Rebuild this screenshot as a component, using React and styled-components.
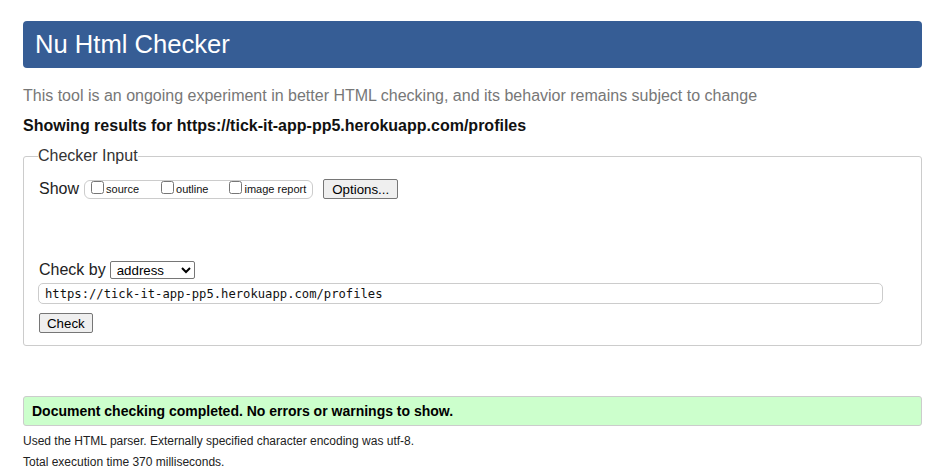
import React from 'react'
import styled, { createGlobalStyle } from 'styled-components'

const Global = createGlobalStyle`
  html, body {
    margin: 0;
    background: #fff;
  }
  body {
    font-family: "Liberation Sans", Arial, sans-serif;
    color: #111;
  }
`

const Page = styled.div`
  padding: 21px 16px 0 23px;
`

const Header = styled.h1`
  margin: 0;
  height: 47px;
  display: flex;
  align-items: center;
  padding-left: 12px;
  background: #365d95;
  color: #fff;
  border-radius: 4px;
  font-size: 25.6px;
  font-weight: normal;
`

const Intro = styled.p`
  margin: 18px 0 0;
  color: #777;
  font-size: 16px;
  line-height: 20px;
`

const Results = styled.p`
  margin: 10px 0 0;
  font-size: 16px;
  line-height: 20px;
  font-weight: bold;
`

const Fieldset = styled.fieldset`
  margin: 11px 0 0;
  border: 1px solid #ccc;
  border-radius: 3px;
  padding: 0 38px 12px 15px;
  min-width: 0;
`

const Legend = styled.legend`
  padding: 0;
  margin-left: -1px;
  font-size: 16px;
  line-height: 18px;
  color: #333;
`

const ShowRow = styled.div`
  display: flex;
  align-items: center;
  margin-top: 14px;
  height: 20px;
`

const Label = styled.span`
  font-size: 16px;
  color: #222;
  margin-right: ${(p) => p.$gap ?? 4}px;
`

const ToggleGroup = styled.div`
  display: flex;
  align-items: center;
  height: 17px;
  border: 1px solid #ccc;
  border-radius: 6px;
  padding: 0 6px 0 6px;
  margin-right: 10px;
`

const Toggle = styled.label`
  display: flex;
  align-items: center;
  font-size: 11px;
  margin-right: ${(p) => p.$gap}px;
  color: #111;

  input {
    width: 13px;
    height: 13px;
    margin: 0 2px 0 0;
    position: relative;
    top: -2px;
  }
  &:last-child {
    margin-right: 0;
  }
`

const Button = styled.button`
  font-family: "Liberation Sans", Arial, sans-serif;
  font-size: 13.3px;
  height: 20px;
  padding: 0 ${(p) => p.$pad ?? 7}px;
  border: 1px solid #767676;
  border-radius: 2px;
  background: #efefef;
  color: #000;
`

const CheckByRow = styled.div`
  display: flex;
  align-items: center;
  margin-top: 62px;
  height: 18px;
`

const Select = styled.select`
  font-family: "Liberation Sans", Arial, sans-serif;
  font-size: 13.3px;
  width: 85px;
  height: 18px;
  padding: 0 0 0 2px;
  border: 1px solid #767676;
  border-radius: 2px;
  background: #fff;
  color: #000;
  margin-left: 0;
`

const UrlInput = styled.input`
  display: block;
  box-sizing: border-box;
  width: 845px;
  height: 21px;
  margin: 4px 0 0 -1px;
  padding: 0 6px;
  border: 1px solid #ccc;
  border-radius: 5px;
  font-family: "DejaVu Sans Mono", "Liberation Mono", monospace;
  font-size: 12.2px;
  color: #111;
`

const SubmitRow = styled.div`
  margin-top: 9px;
`

const Success = styled.div`
  margin-top: 50px;
  height: 28px;
  display: flex;
  align-items: center;
  padding-left: 8px;
  border: 1px solid #ccc;
  border-radius: 3px;
  background: #ccffcc;
  font-size: 14px;
  font-weight: bold;
  color: #000;
`

const Note = styled.p`
  margin: ${(p) => p.$top}px 0 0;
  font-size: 12px;
  line-height: 14px;
  color: #222;
`

export default function App() {
  return (
    <Page>
      <Global />
      <Header>Nu Html Checker</Header>
      <Intro>This tool is an ongoing experiment in better HTML checking, and its behavior remains subject to change</Intro>
      <Results>Showing results for https://tick-it-app-pp5.herokuapp.com/profiles</Results>
      <Fieldset>
        <Legend>Checker Input</Legend>
        <ShowRow>
          <Label $gap={5}>Show</Label>
          <ToggleGroup>
            <Toggle $gap={22}><input type="checkbox" />source</Toggle>
            <Toggle $gap={21}><input type="checkbox" />outline</Toggle>
            <Toggle><input type="checkbox" />image report</Toggle>
          </ToggleGroup>
          <Button $pad={8}>Options...</Button>
        </ShowRow>
        <CheckByRow>
          <Label>Check by</Label>
          <Select defaultValue="address">
            <option value="address">address</option>
            <option value="file">file upload</option>
            <option value="text">text input</option>
          </Select>
        </CheckByRow>
        <UrlInput type="text" defaultValue="https://tick-it-app-pp5.herokuapp.com/profiles" />
        <SubmitRow>
          <Button>Check</Button>
        </SubmitRow>
      </Fieldset>
      <Success>Document checking completed. No errors or warnings to show.</Success>
      <Note $top={8}>Used the HTML parser. Externally specified character encoding was utf-8.</Note>
      <Note $top={7}>Total execution time 370 milliseconds.</Note>
    </Page>
  )
}
